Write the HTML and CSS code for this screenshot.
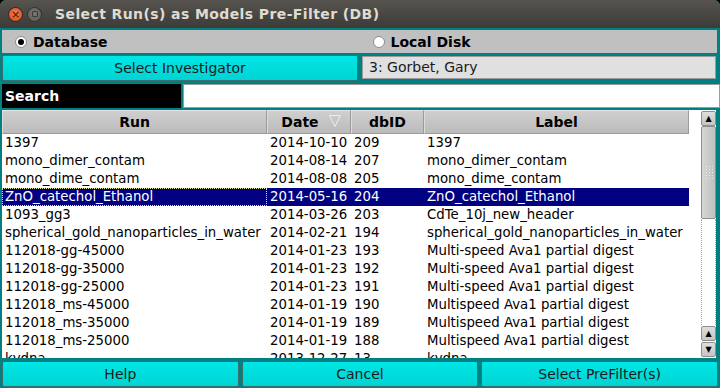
FILE: index.html
```html
<!DOCTYPE html>
<html lang="en">
<head>
  <meta charset="UTF-8" />
  <title>Select Run(s) as Models Pre-Filter (DB)</title>
  <link rel="stylesheet" href="styles.css">
</head>
<body>

<div class="window">
  <div class="titlebar">
    <span class="wbtn wbtn-close">&#215;</span>
    <span class="wbtn wbtn-max"><i></i></span>
    <span class="title">Select Run(s) as Models Pre-Filter (DB)</span>
  </div>

  <div class="frame">
    <div class="sourcebar">
      <label class="radio"><span class="dot checked"></span>Database</label>
      <label class="radio"><span class="dot"></span>Local Disk</label>
    </div>

    <div class="halves">
      <button class="btn">Select Investigator</button>
      <div class="readonly">3: Gorbet, Gary</div>
    </div>

    <div class="searchrow">
      <div class="searchlabel">Search</div>
      <div class="searchinput"></div>
    </div>

    <div class="listbox">
      <div class="grid">
        <div class="head">Run</div>
        <div class="head head-sorted">Date<svg class="sort" width="12" height="12" viewBox="0 0 12 12"><path d="M0.5 0.5 L11.5 0.5 L6 11.5 Z" fill="none" stroke="#ececec" stroke-width="1"/></svg></div>
        <div class="head">dbID</div>
        <div class="head">Label</div>
      </div>
      <div class="rows" id="rows"></div>

      <div class="scrollbar">
        <div class="sbtn">&#9650;</div>
        <div class="thumb"><span class="grip"></span></div>
        <div class="track"></div>
        <div class="sbtn">&#9650;</div>
        <div class="sbtn">&#9660;</div>
      </div>
    </div>

    <div class="buttons">
      <button class="btn">Help</button>
      <button class="btn">Cancel</button>
      <button class="btn">Select PreFilter(s)</button>
    </div>
  </div>
</div>

<script>
  // run, date, dbID, label
  const runs = [
    ['1397', '2014-10-10', '209', '1397'],
    ['mono_dimer_contam', '2014-08-14', '207', 'mono_dimer_contam'],
    ['mono_dime_contam', '2014-08-08', '205', 'mono_dime_contam'],
    ['ZnO_catechol_Ethanol', '2014-05-16', '204', 'ZnO_catechol_Ethanol'],
    ['1093_gg3', '2014-03-26', '203', 'CdTe_10j_new_header'],
    ['spherical_gold_nanoparticles_in_water', '2014-02-21', '194', 'spherical_gold_nanoparticles_in_water'],
    ['112018-gg-45000', '2014-01-23', '193', 'Multi-speed Ava1 partial digest'],
    ['112018-gg-35000', '2014-01-23', '192', 'Multi-speed Ava1 partial digest'],
    ['112018-gg-25000', '2014-01-23', '191', 'Multi-speed Ava1 partial digest'],
    ['112018_ms-45000', '2014-01-19', '190', 'Multispeed Ava1 partial digest'],
    ['112018_ms-35000', '2014-01-19', '189', 'Multispeed Ava1 partial digest'],
    ['112018_ms-25000', '2014-01-19', '188', 'Multispeed Ava1 partial digest'],
    ['kvdna', '2013-12-27', '13', 'kvdna']
  ];
  const selected = 3;

  const rows = document.getElementById('rows');
  runs.forEach((r, i) => {
    const row = document.createElement('div');
    row.className = 'grid row' + (i === selected ? ' selected' : '');
    r.forEach((text, c) => {
      const cell = document.createElement('div');
      cell.className = 'cell' + (c === 0 && i === selected ? ' focus' : '');
      cell.textContent = text;
      row.appendChild(cell);
    });
    rows.appendChild(row);
  });
</script>

</body>
</html>
```

FILE: styles.css
```css
* {
  box-sizing: border-box;
}
body {
  margin: 0;
  font-family: "DejaVu Sans", "Liberation Sans", sans-serif;
  font-size: 13.3px;
  color: #000;
  background: #000;
}
.window {
  width: 720px;
  height: 388px;
  display: flex;
  flex-direction: column;
  background: #008080;
  border-radius: 6px 6px 0 0;
  overflow: hidden;
}

/* title bar */
.titlebar {
  height: 28px;
  flex: none;
  display: flex;
  align-items: center;
  padding-left: 9px;
  background: linear-gradient(#57544f, #3c3b37);
}
.wbtn {
  width: 13px;
  height: 13px;
  border-radius: 50%;
  margin-right: 6px;
  display: flex;
  align-items: center;
  justify-content: center;
  font-size: 11px;
  line-height: 1;
  color: #3a1208;
}
.wbtn-close {
  background: radial-gradient(circle at 50% 40%, #f6774a, #e0491a);
  box-shadow: 0 0 0 1px #3a2a22;
}
.wbtn-max {
  background: radial-gradient(circle at 50% 40%, #7a7873, #5a5853);
  box-shadow: 0 0 0 1px #34332f;
}
.wbtn-max i {
  width: 6px;
  height: 6px;
  border: 1px solid #3a3935;
  border-radius: 1px;
}
.title {
  margin-left: 8px;
  color: #dfdbd2;
  font-weight: bold;
  font-size: 14px;
  letter-spacing: 0.4px;
}

/* body */
.frame {
  flex: 1;
  display: flex;
  flex-direction: column;
  gap: 2px;
  padding: 2px 2px 3px 2px;
}
.sourcebar {
  height: 23px;
  display: grid;
  grid-template-columns: 1fr 1fr;
  background: #c0c0c0;
  margin-right: 1px;
}
.radio {
  display: flex;
  align-items: center;
  padding-left: 13px;
  font-weight: bold;
  font-size: 14px;
}
.dot {
  width: 12px;
  height: 12px;
  border-radius: 50%;
  margin-right: 6px;
  background: #fff;
  border: 1px solid #8c8c8c;
  display: flex;
  align-items: center;
  justify-content: center;
}
.dot.checked::after {
  content: "";
  width: 6px;
  height: 6px;
  border-radius: 50%;
  background: #000;
}

.btn {
  font-family: inherit;
  font-size: 14px;
  color: #1a1a1a;
  height: 26px;
  border: 1px solid #3c6e6e;
  border-radius: 2px;
  background: linear-gradient(#00e6e6, #00d4d4);
  padding: 0;
}
.halves {
  display: grid;
  grid-template-columns: 356px 1fr;
  gap: 4px;
  margin-right: 2px;
}
.readonly {
  height: 23px;
  margin-top: 1px;
  border: 1px solid #9a9a9a;
  background: #e0e0e0;
  padding-left: 6px;
  font-size: 14px;
  line-height: 21px;
  color: #1a1a1a;
}

.searchrow {
  height: 24px;
  display: grid;
  grid-template-columns: 179px 1fr;
  gap: 2px;
  margin-top: 1px;
  margin-right: -2px;
}
.searchlabel {
  background: #000;
  color: #fff;
  font-weight: bold;
  font-size: 14px;
  padding-left: 3px;
  line-height: 24px;
}
.searchinput {
  background: #fff;
  border: 1px solid #9a9a9a;
}

/* run list */
.listbox {
  position: relative;
  height: 248px;
  background: #fff;
  overflow: hidden;
  margin-right: 2px;
  padding-right: 27px;
}
.grid {
  display: grid;
  grid-template-columns: 265px 84px 73px 265px;
}
.head {
  height: 24px;
  line-height: 22px;
  text-align: center;
  font-weight: bold;
  font-size: 14px;
  background: linear-gradient(#cfcfcf, #bbbbbb);
  border: 1px solid #9a9a9a;
  border-top-color: #e4e4e4;
  border-left-color: #dcdcdc;
  position: relative;
}
.head-sorted {
  padding-right: 18px;
}
.sort {
  position: absolute;
  right: 9px;
  top: 4px;
}
.row {
  height: 18px;
  line-height: 18px;
}
.cell {
  padding-left: 3px;
  white-space: nowrap;
  overflow: hidden;
}
.row.selected {
  background: #000080;
  color: #fff;
}
.cell.focus {
  outline: 1px dotted #e8e8a0;
  outline-offset: -1px;
}

.scrollbar {
  position: absolute;
  top: 0;
  right: 0;
  bottom: 1px;
  width: 15px;
  display: flex;
  flex-direction: column;
}
.sbtn {
  height: 15px;
  flex: none;
  border: 1px solid #8e8e8e;
  border-radius: 2px;
  background: linear-gradient(#dedede, #c4c4c4);
  font-size: 8px;
  text-align: center;
  line-height: 13px;
  margin-top: 1px;
}
.thumb {
  height: 93px;
  flex: none;
  border: 1px solid #8e8e8e;
  border-radius: 2px;
  background: linear-gradient(90deg, #d6d6d6, #c0c0c0);
  display: flex;
  align-items: center;
  justify-content: center;
}
.grip {
  width: 8px;
  height: 16px;
  background: radial-gradient(circle, #ececec 1px, transparent 1px) 0 0 / 3px 3px;
}
.track {
  flex: 1;
  border-left: 1px dotted #a8a8a8;
  border-right: 1px dotted #a8a8a8;
}

.buttons {
  display: grid;
  grid-template-columns: 1fr 1fr 1fr;
  gap: 3px;
  margin-top: 1px;
}
```
